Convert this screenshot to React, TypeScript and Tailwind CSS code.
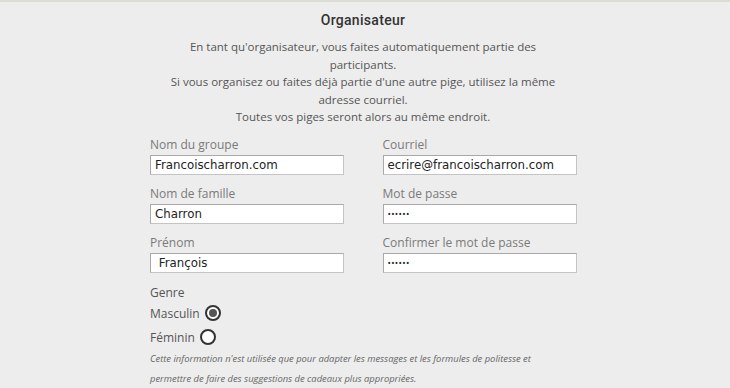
import { useState } from 'react';

interface FieldProps {
  label: string;
  value: string;
  password?: boolean;
}

function Field({ label, value, password }: FieldProps) {
  return (
    <div className="flex flex-col">
      <label className="text-[12px] leading-[17px] text-[#7a7a7a]">{label}</label>
      <input
        readOnly
        value={value}
        className={`mt-[2px] h-[20px] w-[194px] bg-white border border-[#c4c4c4] border-t-[#a9a9a9] border-l-[#a9a9a9] px-[4px] text-[#222] outline-none ${
          password ? 'text-[9px] tracking-[0.3px]' : "text-[11.8px] font-['DejaVu_Sans',sans-serif]"
        }`}
      />
    </div>
  );
}

function Radio({ checked }: { checked: boolean }) {
  return (
    <span className="w-[16px] h-[16px] rounded-full border-2 border-[#333] bg-white flex items-center justify-center">
      {checked && <span className="w-[8px] h-[8px] rounded-full bg-[#555]" />}
    </span>
  );
}

export default function App() {
  const [genre, setGenre] = useState<'m' | 'f'>('m');

  return (
    <div className="w-[730px] h-[388px] overflow-hidden bg-[#ededed] border-t-2 border-[#dcdcd5] font-['Open_Sans',sans-serif]">
      <div className="w-[426px] ml-[150px]">
        {/* Header */}
        <h2 className="pt-[8px] text-center text-[14px] leading-[20px] font-medium text-[#333] font-['Roboto',sans-serif] tracking-[0.3px]">
          Organisateur
        </h2>
        <div className="mt-[8px] text-center text-[11.5px] leading-[17.5px] text-[#555]">
          <p>
            En tant qu'organisateur, vous faites automatiquement partie des
            <br />
            participants.
          </p>
          <p>
            Si vous organisez ou faites déjà partie d'une autre pige, utilisez la même
            <br />
            adresse courriel.
          </p>
          <p>Toutes vos piges seront alors au même endroit.</p>
        </div>

        {/* Form */}
        <div className="mt-[10px] grid grid-cols-2 gap-x-[39px] gap-y-[10px]">
          <Field label="Nom du groupe" value="Francoischarron.com" />
          <Field label="Courriel" value="ecrire@francoischarron.com" />
          <Field label="Nom de famille" value="Charron" />
          <Field label="Mot de passe" value="••••••" password />
          <Field label="Prénom" value=" François" />
          <Field label="Confirmer le mot de passe" value="••••••" password />
        </div>

        {/* Genre */}
        <div className="mt-[11px] text-[12px] text-[#555]">
          <div className="leading-[17px]">Genre</div>
          <button onClick={() => setGenre('m')} className="mt-[4px] flex items-center gap-[5px] leading-[17px]">
            Masculin <Radio checked={genre === 'm'} />
          </button>
          <button onClick={() => setGenre('f')} className="mt-[7px] flex items-center gap-[5px] leading-[17px]">
            Féminin <Radio checked={genre === 'f'} />
          </button>
          <p className="mt-[3px] text-[9.4px] leading-[20px] italic text-[#666]">
            Cette information n'est utilisée que pour adapter les messages et les formules de politesse et
            <br />
            permettre de faire des suggestions de cadeaux plus appropriées.
          </p>
        </div>
      </div>
    </div>
  );
}
